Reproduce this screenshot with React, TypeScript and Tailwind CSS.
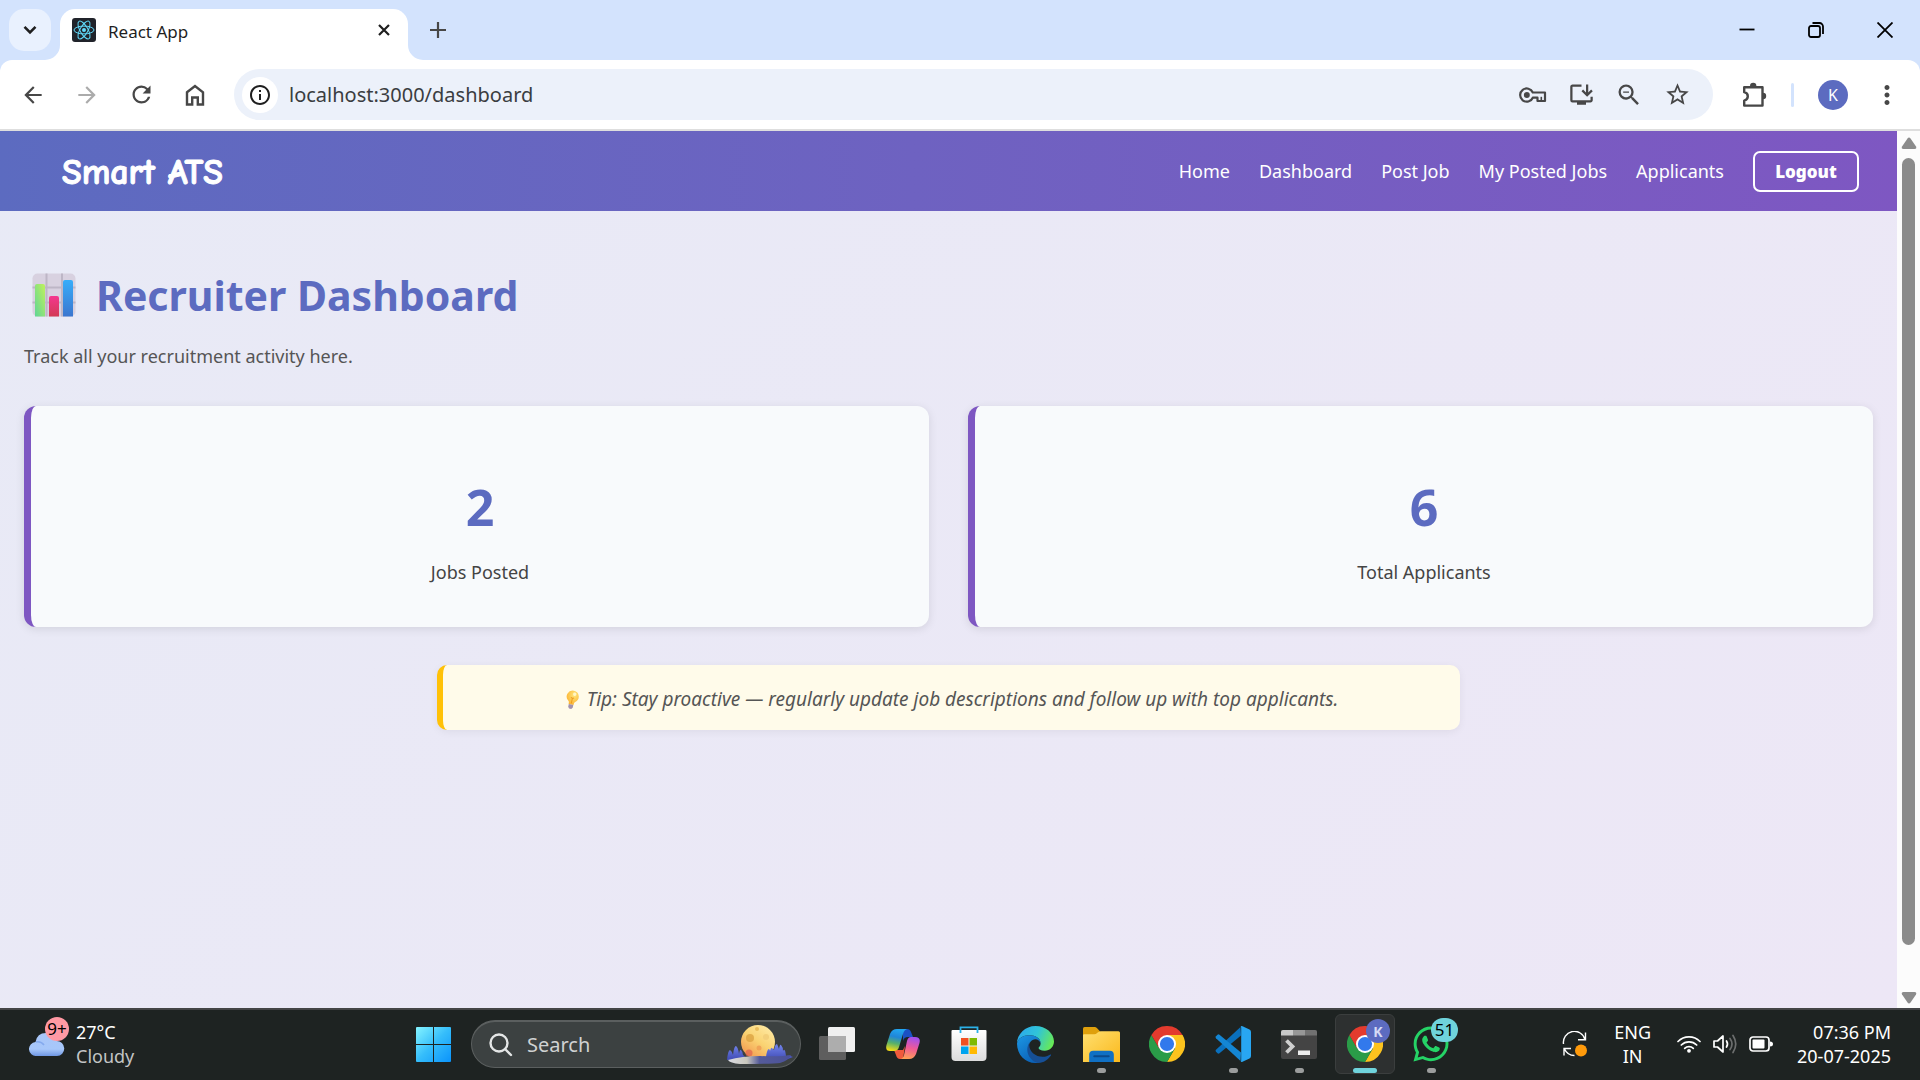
import React from "react";
import {
  MdArrowBack,
  MdArrowForward,
  MdRefresh,
  MdInfoOutline,
  MdOutlineInstallDesktop,
  MdZoomOut,
  MdStarBorder,
  MdMoreVert,
} from "react-icons/md";
import { FaWhatsapp } from "react-icons/fa";

const NAV_LINKS = ["Home", "Dashboard", "Post Job", "My Posted Jobs", "Applicants"];
const STATS = [
  { value: 2, label: "Jobs Posted" },
  { value: 6, label: "Total Applicants" },
];

function ReactLogo() {
  return (
    <svg viewBox="0 0 24 24" className="size-6" aria-hidden="true">
      <rect width="24" height="24" rx="3" fill="#20232a" />
      <g fill="none" stroke="#61dafb" strokeWidth="1">
        <ellipse cx="12" cy="12" rx="10" ry="3.9" />
        <ellipse cx="12" cy="12" rx="10" ry="3.9" transform="rotate(60 12 12)" />
        <ellipse cx="12" cy="12" rx="10" ry="3.9" transform="rotate(120 12 12)" />
      </g>
      <circle cx="12" cy="12" r="2" fill="#61dafb" />
    </svg>
  );
}

function KeyIcon() {
  return (
    <svg viewBox="0 0 28 20" width="28" height="20" fill="none" stroke="#474747" strokeWidth="2.2" aria-hidden="true">
      <path d="M13.8 7.5A6.6 6.6 0 1 0 13.8 12.7H18.5V16H26V7.5Z" strokeLinejoin="round" />
      <path d="M22.3 16V11.8" strokeWidth="1.6" />
      <circle cx="7.8" cy="10" r="3" fill="#474747" stroke="none" />
    </svg>
  );
}

function PuzzleIcon() {
  return (
    <svg viewBox="0 0 26 26" width="26" height="26" aria-hidden="true">
      <path d="M3.2 5.2H21.5V23.6H3.2V18.6C8 17.5 8 11.2 3.2 10.2Z" fill="none" stroke="#474747" strokeWidth="2.4" strokeLinejoin="round" />
      <path d="M9 4a3.2 3.2 0 0 1 6.4 0ZM22 10.8a3.2 3.2 0 0 1 0 6.4Z" fill="#474747" />
    </svg>
  );
}

function IconButton({ label, className = "", children }: { label: string; className?: string; children: React.ReactNode }) {
  return (
    <button type="button" aria-label={label} className={`flex shrink-0 items-center justify-center rounded-full text-[#474747] ${className}`}>
      {children}
    </button>
  );
}

function TabStrip() {
  return (
    <div className="flex h-[60px] items-end bg-[#d3e3fd]">
      <button type="button" aria-label="Search tabs" className="ml-[9px] mb-[9px] flex size-[42px] items-center justify-center rounded-[15px] bg-[#e9f1fe] text-[#1f1f1f]">
        <svg viewBox="0 0 14 10" width="14" height="10" fill="none" stroke="currentColor" strokeWidth="2.6" aria-hidden="true">
          <path d="M1.5 1.8 7 7.3l5.500-5.500" />
        </svg>
      </button>
      <div className="relative ml-[9px] flex h-[51px] w-[348px] items-center rounded-t-[15px] bg-white pr-3 pb-[9px] pl-3">
        <svg viewBox="0 0 15 15" className="absolute bottom-0 -left-[15px] size-[15px] fill-white" aria-hidden="true">
          <path d="M15 0v15H0A15 15 0 0 0 15 0Z" />
        </svg>
        <svg viewBox="0 0 15 15" className="absolute -right-[15px] bottom-0 size-[15px] fill-white" aria-hidden="true">
          <path d="M0 0v15h15A15 15 0 0 1 0 0Z" />
        </svg>
        <ReactLogo />
        <span className="ml-3 grow pt-[3px] text-[17px] text-[#1f1f1f]">React App</span>
        <button type="button" aria-label="Close tab" className="flex size-6 items-center justify-center text-[#1f1f1f]">
          <svg viewBox="0 0 12 12" width="12" height="12" stroke="currentColor" strokeWidth="2.2" aria-hidden="true">
            <path d="M1 1l10 10M11 1 1 11" />
          </svg>
        </button>
      </div>
      <button type="button" aria-label="New tab" className="mb-[15px] ml-[15px] flex size-[30px] items-center justify-center">
        <svg viewBox="0 0 16 16" width="16" height="16" stroke="#474747" strokeWidth="2.2" aria-hidden="true">
          <path d="M8 0v16M0 8h16" />
        </svg>
      </button>
      <div className="ml-auto flex h-full pr-px">
        <button type="button" aria-label="Minimize" className="flex w-[69px] items-center justify-center">
          <svg viewBox="0 0 16 16" width="16" height="16" stroke="#000" strokeWidth="1.8" aria-hidden="true">
            <path d="M0.500 7.500h15" />
          </svg>
        </button>
        <button type="button" aria-label="Restore" className="flex w-[69px] items-center justify-center">
          <svg viewBox="0 0 16 16" width="16" height="16" fill="none" stroke="#000" strokeWidth="1.8" aria-hidden="true">
            <rect x="1" y="4" width="11" height="11" rx="2" />
            <path d="M4.500 1H11.500A3.500 3.500 0 0 1 15 4.500V12" />
          </svg>
        </button>
        <button type="button" aria-label="Close" className="flex w-[69px] items-center justify-center">
          <svg viewBox="0 0 16 16" width="16" height="16" stroke="#000" strokeWidth="1.8" aria-hidden="true">
            <path d="M0.500 0.500l15 15M15.500 0.500l-15 15" />
          </svg>
        </button>
      </div>
    </div>
  );
}

function Toolbar() {
  return (
    <div className="bg-[#d3e3fd]">
      <div className="flex h-[71px] items-center rounded-t-[12px] border-b-2 border-[#dedede] bg-white pl-[6px]">
        <IconButton label="Back" className="h-[42px] w-[54px]">
          <MdArrowBack size={26} />
        </IconButton>
        <IconButton label="Forward" className="h-[42px] w-[54px] opacity-45">
          <MdArrowForward size={26} />
        </IconButton>
        <IconButton label="Reload" className="h-[42px] w-[54px]">
          <MdRefresh size={27} />
        </IconButton>
        <IconButton label="Home" className="h-[42px] w-[54px]">
          <svg viewBox="0 0 20 22" width="20" height="22" fill="none" stroke="currentColor" strokeWidth="2.4" aria-hidden="true">
            <path d="M2 8.300 10 2l8 6.300V20.500H12.800V13.500H7.200V20.500H2Z" />
          </svg>
        </IconButton>
        <div className="ml-3 flex h-[51px] grow items-center rounded-full bg-[#ecf1fa] pr-3 pl-2">
          <IconButton label="Site information" className="size-9 bg-white">
            <MdInfoOutline size={24} className="text-[#1f1f1f]" />
          </IconButton>
          <input
            aria-label="Address"
            type="text"
            defaultValue="localhost:3000/dashboard"
            className="ml-[11px] min-w-0 grow bg-transparent text-[20px] text-[#3a3d41] outline-none"
          />
          <div className="flex">
            <IconButton label="Manage passwords" className="h-[42px] w-12">
              <KeyIcon />
            </IconButton>
            <IconButton label="Install app" className="h-[42px] w-12">
              <MdOutlineInstallDesktop size={27} />
            </IconButton>
            <IconButton label="Zoom" className="h-[42px] w-12">
              <MdZoomOut size={28} />
            </IconButton>
            <IconButton label="Bookmark this tab" className="h-[42px] w-12">
              <MdStarBorder size={27} />
            </IconButton>
          </div>
        </div>
        <IconButton label="Extensions" className="ml-5 size-[42px]">
          <PuzzleIcon />
        </IconButton>
        <div className="ml-4 h-6 w-[3px] rounded-full bg-[#d3e3fd]" />
        <button type="button" aria-label="Profile K" className="ml-6 flex size-[30px] items-center justify-center rounded-full bg-[#5c6bc0] text-[16px] text-white">
          K
        </button>
        <IconButton label="Menu" className="mr-3 ml-[18px] size-[42px]">
          <MdMoreVert size={30} />
        </IconButton>
      </div>
    </div>
  );
}

function SiteHeader() {
  return (
    <header className="flex h-20 shrink-0 items-center justify-between bg-linear-to-r from-[#5c6bc0] to-[#7e57c2] pr-[38px] pl-[62px] text-white">
      <div className="pt-1 font-['Comic_Sans_MS','Comic_Neue','Lato',sans-serif] text-[36px] leading-[48px] font-bold [-webkit-text-stroke:1px_white]">
        Smart ATS
      </div>
      <nav className="flex items-center gap-[29px] text-[18px]">
        {NAV_LINKS.map((link) => (
          <a key={link} href="#" className="whitespace-nowrap">
            {link}
          </a>
        ))}
        <button type="button" className="h-[41px] w-[106px] rounded-[7px] border-2 border-white pt-px text-[17px] font-black">
          Logout
        </button>
      </nav>
    </header>
  );
}

function ChartEmoji() {
  return (
    <svg viewBox="0 0 44 44" className="size-11" aria-hidden="true">
      <defs>
        <linearGradient id="barGreen" x1="1" y1="0" x2="0" y2="1">
          <stop offset="0" stopColor="#c0f25c" />
          <stop offset="1" stopColor="#5fd596" />
        </linearGradient>
        <linearGradient id="barPink" x1="0" y1="0" x2="0" y2="1">
          <stop offset="0" stopColor="#f4368f" />
          <stop offset="1" stopColor="#d23a55" />
        </linearGradient>
        <linearGradient id="barBlue" x1="0" y1="0" x2="0" y2="1">
          <stop offset="0" stopColor="#37adfa" />
          <stop offset="1" stopColor="#3b76cf" />
        </linearGradient>
      </defs>
      <rect x="0.500" y="0.500" width="43" height="43" rx="5" fill="#d8d1e0" />
      <path d="M14.500 0.500v43M30 0.500v43M0.500 14.500h43M0.500 29.500h43" stroke="#bdb6c6" strokeWidth="2" />
      <path d="M3 43.500V13a2 2 0 0 1 2-2h6a2 2 0 0 1 2 2v30.500Z" fill="url(#barGreen)" />
      <path d="M17 43.500V25a2 2 0 0 1 2-2h6a2 2 0 0 1 2 2v18.500Z" fill="url(#barPink)" />
      <path d="M31 43.500V9a2 2 0 0 1 2-2h6a2 2 0 0 1 2 2v34.500Z" fill="url(#barBlue)" />
    </svg>
  );
}

function BulbEmoji() {
  return (
    <svg viewBox="0 0 14 20" width="14" height="20" aria-hidden="true">
      <defs>
        <radialGradient id="bulb" cx="0.6" cy="0.3" r="0.8">
          <stop offset="0" stopColor="#ffe57a" />
          <stop offset="1" stopColor="#fbae2c" />
        </radialGradient>
      </defs>
      <g transform="rotate(12 7 10)">
        <path d="M7 0.500a6 6 0 0 1 3.600 10.800c-1 .8-1 1.600-1.100 3.200h-5c0-1.600-.1-2.400-1.100-3.200A6 6 0 0 1 7 .5Z" fill="url(#bulb)" />
        <circle cx="8.500" cy="3.800" r="1.700" fill="#fff6c8" />
        <path d="M5.500 7.500c.8 1 2.200 1 3 0M7 8.500v5" stroke="#ee9a1f" fill="none" />
        <path d="M4.700 14.500h4.600v3l-1.200 1.500H5.900l-1.200-1.500Z" fill="#a292ae" />
      </g>
    </svg>
  );
}

function Dashboard() {
  return (
    <main className="grow px-6 pt-14">
      <h1 className="flex items-center gap-5 pl-2 text-[41px] leading-[56px] font-bold text-[#5c6bc0]">
        <ChartEmoji />
        Recruiter Dashboard
      </h1>
      <p className="mt-[19px] text-[18px] leading-[28px] text-[#555]">Track all your recruitment activity here.</p>
      <section className="mt-9 grid grid-cols-2 gap-[39px]">
        {STATS.map((stat) => (
          <div
            key={stat.label}
            className="flex h-[221px] flex-col items-center rounded-[12px] border-l-[7px] border-[#7e57c2] bg-[#f8fafc] pt-[67px] shadow-[0_2px_10px_rgba(0,0,0,0.1)]"
          >
            <h2 className="text-[50px] leading-[68px] font-bold text-[#5c6bc0]">{stat.value}</h2>
            <p className="mt-[17px] text-[18px] leading-[28px] text-[#444]">{stat.label}</p>
          </div>
        ))}
      </section>
      <div className="mx-auto mt-[38px] flex h-[65px] max-w-[1023px] items-center justify-center gap-2 rounded-[10px] border-l-[6px] border-[#ffc107] bg-[#fffbea] pt-1 text-[19px] text-[#555] italic shadow-[0_2px_8px_rgba(0,0,0,0.06)]">
        <BulbEmoji />
        <span>Tip: Stay proactive — regularly update job descriptions and follow up with top applicants.</span>
      </div>
    </main>
  );
}

function Scrollbar() {
  return (
    <div className="flex w-[23px] shrink-0 flex-col items-center bg-[#fcfcfc] pt-[5px] pb-[3px]" aria-hidden="true">
      <svg viewBox="0 0 16 14" width="16" height="14" className="fill-[#8b8b8b]">
        <path d="M6.500 2.500 1 10.500Q0 13 2.500 13h11Q16 13 15 10.500L9.500 2.500Q8 .5 6.500 2.500Z" />
      </svg>
      <div className="mt-2 w-[13px] grow rounded-full bg-[#8b8b8b]" />
      <svg viewBox="0 0 16 14" width="16" height="14" className="mt-[46px] rotate-180 fill-[#8b8b8b]">
        <path d="M6.500 2.500 1 10.500Q0 13 2.500 13h11Q16 13 15 10.500L9.500 2.500Q8 .5 6.500 2.500Z" />
      </svg>
    </div>
  );
}

function WindowsLogo() {
  return (
    <svg viewBox="0 0 35 35" width="35" height="35" aria-hidden="true">
      <defs>
        <linearGradient id="win" gradientUnits="userSpaceOnUse" x1="0" y1="0" x2="35" y2="35">
          <stop offset="0" stopColor="#85f4ff" />
          <stop offset="0.5" stopColor="#35bdfb" />
          <stop offset="1" stopColor="#0a93fb" />
        </linearGradient>
      </defs>
      <path d="M1 0h16v17H0V1Q0 0 1 0ZM18 0h16q1 0 1 1v16H18ZM0 18h17v17H1q-1 0-1-1ZM18 18h17v16q0 1-1 1H18Z" fill="url(#win)" />
    </svg>
  );
}

function MoonScene() {
  return (
    <svg viewBox="0 0 66 42" width="66" height="42" className="shrink-0" aria-hidden="true">
      <defs>
        <linearGradient id="moon" x1="1" y1="0" x2="0.3" y2="1">
          <stop offset="0" stopColor="#ffeeae" />
          <stop offset="0.55" stopColor="#fad372" />
          <stop offset="1" stopColor="#f39a50" />
        </linearGradient>
        <linearGradient id="shore" x1="0" x2="1">
          <stop offset="0" stopColor="#dcdde4" />
          <stop offset="0.3" stopColor="#c9c7bd" />
          <stop offset="0.5" stopColor="#555b9a" />
          <stop offset="1" stopColor="#4a519a" />
        </linearGradient>
        <linearGradient id="trees" x1="0" y1="0" x2="0" y2="1">
          <stop offset="0" stopColor="#7486ee" />
          <stop offset="1" stopColor="#3c47b0" />
        </linearGradient>
      </defs>
      <circle cx="31" cy="18" r="17" fill="url(#moon)" />
      <circle cx="23" cy="14" r="4" fill="#d9a03f" opacity=".75" />
      <circle cx="39" cy="13" r="3" fill="#f3cf7a" />
      <circle cx="30" cy="5" r="2" fill="#eabd5c" />
      <circle cx="32" cy="24" r="2.500" fill="#f0a457" />
      <circle cx="22" cy="29" r="3.500" fill="#e0664f" opacity=".75" />
      <path d="M0 36q1-10 3-10 2 1 3 5 1-9 3-9 2 1 3 8 1-5 2-4 2 2 2 5 2 1 2 3l-6 3ZM39 33q1-8 3-8 1 1 1 2 1-4 2-3l2 2q1-6 3-6 1 2 2 5 1-5 2-4 2 2 2 6 2-4 3 5 3-1 7 1l-10 4Z" fill="url(#trees)" />
      <path d="M1 36Q15 32 33 32q20 1 31-1-2 5-11 8-5 1-40 1-10-1-12-4Z" fill="url(#shore)" />
    </svg>
  );
}

function TaskViewIcon() {
  return (
    <svg viewBox="0 0 36 34" width="36" height="34" aria-hidden="true">
      <rect x="0" y="9" width="27" height="24" rx="1.500" fill="#5e5e5e" />
      <rect x="9" y="0" width="27" height="25" rx="1.500" fill="#f0f0f0" />
      <path d="M9 9h18v16H9Z" fill="#adadad" />
    </svg>
  );
}

function CopilotIcon() {
  return (
    <svg viewBox="0 0 34 32" width="34" height="32" aria-hidden="true">
      <defs>
        <linearGradient id="copL" x1="0.5" y1="0" x2="0.3" y2="1">
          <stop offset="0" stopColor="#22a5f0" />
          <stop offset="0.35" stopColor="#1f86d8" />
          <stop offset="0.65" stopColor="#58b06a" />
          <stop offset="1" stopColor="#f6dc14" />
        </linearGradient>
        <linearGradient id="copR" x1="0.6" y1="0" x2="0.4" y2="1">
          <stop offset="0" stopColor="#a050f0" />
          <stop offset="0.5" stopColor="#f05a96" />
          <stop offset="1" stopColor="#fda055" />
        </linearGradient>
      </defs>
      <path d="M17 1h4q3 0 4 3l2 5h-5q-4 0-5 4Z" fill="#1b50c4" />
      <path d="M8 22h9l2-4-2 13h-3q-3 0-4-4Z" fill="#ef5a3c" />
      <path d="M11 1h10q-3 1-4 5l-4 13q-1 4-5 4H4q-5 0-3.500-6L4 6Q6 1 11 1Z" fill="url(#copL)" />
      <path d="M25 9h4q6 0 4.500 6l-3.500 11q-2 5-7 5H14q3 0 4-4l3-14q1-4 4-4Z" fill="url(#copR)" />
    </svg>
  );
}

function StoreIcon() {
  return (
    <svg viewBox="0 0 36 36" width="36" height="36" aria-hidden="true">
      <defs>
        <linearGradient id="bag" x1="0" y1="0" x2="0" y2="1">
          <stop offset="0" stopColor="#fff" />
          <stop offset="1" stopColor="#dcdcdc" />
        </linearGradient>
      </defs>
      <path d="M0.500 5q0-1 1-1h33q1 0 1 1v26q0 4-4 4h-27q-4 0-4-4Z" fill="url(#bag)" />
      <path d="M9.500 7V1.300h17V7" fill="none" stroke="#2bb1e8" strokeWidth="1.800" />
      <path d="M10 12h7.500v7.500H10Z" fill="#f25022" />
      <path d="M18.500 12H26v7.500h-7.500Z" fill="#7fba00" />
      <path d="M10 20.500h7.500V28H10Z" fill="#00a4ef" />
      <path d="M18.500 20.500H26V28h-7.500Z" fill="#ffb900" />
    </svg>
  );
}

function EdgeIcon() {
  return (
    <svg viewBox="0 0 36 36" width="37" height="37" aria-hidden="true">
      <defs>
        <linearGradient id="edgeTop" x1="0" y1="0.3" x2="1" y2="0.6">
          <stop offset="0" stopColor="#2ba9ec" />
          <stop offset="0.5" stopColor="#30c4d8" />
          <stop offset="1" stopColor="#68ea55" />
        </linearGradient>
        <linearGradient id="edgeMid" x1="0" y1="0" x2="0.6" y2="1">
          <stop offset="0" stopColor="#1c97e4" />
          <stop offset="1" stopColor="#0b62b8" />
        </linearGradient>
      </defs>
      <path d="M0 17C0 8 8 0 18 0s18 7 18 15c0 5-4 9-9 9-4 0-6-1-6-2.500 0-1 2-2 2-4.500C23 12 18 9 12 9 6 9 1 12 0 17Z" fill="url(#edgeTop)" />
      <path d="M0 17c1-5 6-8 12-8 6 0 11 3 11 8-1-3-3-4-5-4-4 0-7 4-7 9 0 6 4 12 11 14-2 .3-3 0-4 0C8 36 0 28 0 17Z" fill="url(#edgeMid)" />
      <path d="M12 19c0 6 6 11 13 11 3 0 5-1 7-2 1-.5 1.500 0 1 .8C30 33 26 36 21 36c-6-1-11-7-11-13 0-3 1-6 3-8-1 1-1 3-1 4Z" fill="#164f96" />
    </svg>
  );
}

function ExplorerIcon() {
  return (
    <svg viewBox="0 0 36 34" width="37" height="35" aria-hidden="true">
      <defs>
        <linearGradient id="folder" x1="0" y1="0" x2="1" y2="1">
          <stop offset="0" stopColor="#ffdf70" />
          <stop offset="1" stopColor="#fab91c" />
        </linearGradient>
      </defs>
      <path d="M0 1.500Q0 0 1.500 0h10q1 0 2 1l3 3v8H0Z" fill="#dfa00c" />
      <path d="M0 8q0-1 1-1h10q1.500 0 3-1.500Q15.500 4 17 4h17.500Q36 4 36 5.500V34H0Z" fill="url(#folder)" />
      <path d="M6 34V27q0-4 4-4h16q4 0 4 4v7Z" fill="#1070c4" />
      <path d="M11 28.500h14" stroke="#0b4a8c" strokeWidth="2" strokeLinecap="round" />
    </svg>
  );
}

function ChromeIcon() {
  return (
    <svg viewBox="0 0 36 36" width="36" height="36" aria-hidden="true">
      <path d="M18 18 2.410 9A18 18 0 0 1 33.590 9Z" fill="#e33b2e" />
      <path d="M18 9H33.590A18 18 0 0 1 18 36L25.790 22.500Z" fill="#fcc31e" />
      <path d="M10.210 22.500 2.410 9A18 18 0 0 0 18 36L25.790 22.500Z" fill="#2a9c48" />
      <path d="M18 9H33.590L2.410 9 10.210 22.500Z" fill="#e33b2e" />
      <circle cx="18" cy="18" r="9" fill="#fff" />
      <circle cx="18" cy="18" r="7.100" fill="#3279ec" />
    </svg>
  );
}

function VsCodeIcon() {
  return (
    <svg viewBox="0 0 36 36" width="36" height="36" aria-hidden="true">
      <path d="M26 9.500 4.500 27.300q-1 .8-2 0l-1.500-1.500q-1-1 0-2L25.500 1Z" fill="#0a70bd" />
      <path d="M26 26.500 4.500 8.700q-1-.8-2 0L1 10.200q-1 1 0 2L25.500 35Z" fill="#1486d4" />
      <path d="M25.500.5q.8-.8 2-.3l7 3.300q1.500.8 1.500 2.500v24q0 1.700-1.500 2.500l-7 3.300q-1.200.5-2-.3.700.2.700-1.500V2q0-1.700-.7-1.500Z" fill="#28a6f2" />
    </svg>
  );
}

function TerminalIcon() {
  return (
    <svg viewBox="0 0 36 29" width="36" height="29" aria-hidden="true">
      <rect width="36" height="29" rx="2" fill="#444" />
      <path d="M0 2q0-2 2-2h10v5.500H0Z" fill="#c9c9c9" />
      <path d="M12 0h12v5.500H12Z" fill="#979797" />
      <path d="M24 0h10q2 0 2 2v3.500H24Z" fill="#717171" />
      <path d="M5.500 10.500 11.500 16.500 5.500 22.500" fill="none" stroke="#cfcfcf" strokeWidth="3.800" />
      <path d="M17 20.500h12v4.500H17Z" fill="#ececec" />
    </svg>
  );
}

function CloudIcon() {
  return (
    <svg viewBox="0 0 36 24" width="36" height="24" aria-hidden="true">
      <defs>
        <linearGradient id="cloud" x1="0" y1="0" x2="0" y2="1">
          <stop offset="0" stopColor="#a9c6f8" />
          <stop offset="0.7" stopColor="#a7c7fa" />
          <stop offset="1" stopColor="#6f97e4" />
        </linearGradient>
      </defs>
      <path d="M7.500 24a7 7 0 0 1-1-14Q8 1 17 1q8 0 10.500 8A7.500 7.500 0 0 1 28 24Z" fill="url(#cloud)" />
      <path d="M7 10q5-1 8 3" fill="none" stroke="#6d96e6" strokeWidth="1.500" opacity=".6" />
    </svg>
  );
}

type AppState = "closed" | "open" | "active";

function TaskbarItem({ label, state = "closed", badge, children }: { label: string; state?: AppState; badge?: React.ReactNode; children: React.ReactNode }) {
  return (
    <button type="button" aria-label={label} className="relative flex h-full w-[66px] shrink-0 items-center justify-center">
      {state === "active" && <span className="absolute inset-x-[3px] inset-y-1 rounded-[6px] border border-[#3b3e3e] bg-[#2d3030]" />}
      <span className="relative">
        {children}
        {badge}
      </span>
      {state === "open" && <span className="absolute bottom-[5px] h-[5px] w-[9px] rounded-full bg-[#9b9d9d]" />}
      {state === "active" && <span className="absolute bottom-[5px] h-[5px] w-6 rounded-full bg-[#6fd3dc]" />}
    </button>
  );
}

function UpdateIcon() {
  return (
    <svg viewBox="0 0 26 26" width="26" height="26" fill="none" stroke="#fff" strokeWidth="1.400" aria-hidden="true">
      <path d="M1.500 13A11 11 0 0 1 23 8.500M23.500 1.500v7.300h-7.500M2 24.500V17.500h7M2.500 18a11 11 0 0 0 10 6.500" />
      <circle cx="19" cy="19.500" r="6" fill="#ff9a0b" stroke="none" />
    </svg>
  );
}

function WifiIcon() {
  return (
    <svg viewBox="0 0 24 18" width="24" height="18" fill="none" stroke="#fff" strokeWidth="1.700" strokeLinecap="round" aria-hidden="true">
      <path d="M1 6.500a15.500 15.500 0 0 1 22 0M4.300 10a11 11 0 0 1 15.400 0M7.700 13.300a6.200 6.200 0 0 1 8.600 0" />
      <circle cx="12" cy="15.800" r="1.900" fill="#fff" stroke="none" />
    </svg>
  );
}

function VolumeIcon() {
  return (
    <svg viewBox="0 0 24 20" width="24" height="20" fill="none" stroke="#fff" strokeWidth="1.700" strokeLinecap="round" strokeLinejoin="round" aria-hidden="true">
      <path d="M1 7h3.500L10 2v16l-5.500-5H1Z" />
      <path d="M13.500 7q2 3 0 6" />
      <path d="M17 4.500q4 5.500 0 11M20 1.500q5.500 8.500 0 17" stroke="#6c6e6e" />
    </svg>
  );
}

function BatteryIcon() {
  return (
    <svg viewBox="0 0 24 16" width="24" height="16" aria-hidden="true">
      <rect x="1" y="1" width="19" height="14" rx="3" fill="none" stroke="#fff" strokeWidth="1.700" />
      <rect x="3.500" y="3.500" width="12" height="9" rx="1" fill="#fff" />
      <path d="M21 5.500q3 0 3 2.500t-3 2.500Z" fill="#fff" />
    </svg>
  );
}

function Taskbar() {
  return (
    <footer className="flex h-[72px] items-center border-t-2 border-[#444547] bg-[#1e2322] pb-[2px] text-white">
      <button type="button" className="flex h-full w-[400px] items-center pl-[29px] text-left text-[18px] leading-6">
        <span className="relative">
          <CloudIcon />
          <span className="absolute -top-[15px] left-4 flex size-6 items-center justify-center rounded-full bg-[#ff99a4] text-[17px] text-black">9+</span>
        </span>
        <span className="ml-[11px] flex flex-col">
          <span>27°C</span>
          <span className="text-[#c3c5c5]">Cloudy</span>
        </span>
      </button>
      <TaskbarItem label="Start">
        <WindowsLogo />
      </TaskbarItem>
      <label className="mr-[3px] ml-[5px] flex h-12 w-[330px] shrink-0 items-center overflow-hidden rounded-full border border-t-2 border-[#5b5f5f] bg-[#3c4141] pr-[7px] pl-[17px]">
        <svg viewBox="0 0 24 24" width="24" height="24" className="shrink-0" fill="none" stroke="#e4e6e6" strokeWidth="2.400" strokeLinecap="round" aria-hidden="true">
          <circle cx="10" cy="10" r="8.500" />
          <path d="m16 16 6 6" />
        </svg>
        <input type="text" aria-label="Search" placeholder="Search" className="ml-[14px] min-w-0 grow bg-transparent text-[20px] outline-none placeholder:text-[#d0d2d2]" />
        <MoonScene />
      </label>
      <TaskbarItem label="Task view">
        <TaskViewIcon />
      </TaskbarItem>
      <TaskbarItem label="Copilot">
        <CopilotIcon />
      </TaskbarItem>
      <TaskbarItem label="Microsoft Store">
        <StoreIcon />
      </TaskbarItem>
      <TaskbarItem label="Microsoft Edge">
        <EdgeIcon />
      </TaskbarItem>
      <TaskbarItem label="File Explorer" state="open">
        <ExplorerIcon />
      </TaskbarItem>
      <TaskbarItem label="Google Chrome">
        <ChromeIcon />
      </TaskbarItem>
      <TaskbarItem label="Visual Studio Code" state="open">
        <VsCodeIcon />
      </TaskbarItem>
      <TaskbarItem label="Terminal" state="open">
        <TerminalIcon />
      </TaskbarItem>
      <TaskbarItem
        label="Google Chrome, profile K"
        state="active"
        badge={
          <span className="absolute -top-[7px] -right-[7px] flex size-6 items-center justify-center rounded-full bg-[#5c6bc0] text-[14px] font-bold text-[#d5daf5]">
            K
          </span>
        }
      >
        <ChromeIcon />
      </TaskbarItem>
      <TaskbarItem
        label="WhatsApp"
        state="open"
        badge={
          <span className="absolute -top-[6px] -right-[7px] flex h-6 w-[27px] items-center justify-center rounded-full bg-[#6fd3dc] text-[17px] text-black">51</span>
        }
      >
        <FaWhatsapp size={40} color="#25d366" />
      </TaskbarItem>
      <div className="ml-auto flex items-center pr-[29px] text-[18px] leading-6">
        <UpdateIcon />
        <div className="ml-[26px] flex flex-col items-center">
          <span>ENG</span>
          <span>IN</span>
        </div>
        <div className="ml-[26px] flex items-center gap-3">
          <WifiIcon />
          <VolumeIcon />
          <BatteryIcon />
        </div>
        <div className="ml-6 flex flex-col items-end">
          <span>07:36 PM</span>
          <span>20-07-2025</span>
        </div>
      </div>
    </footer>
  );
}

export default function App() {
  return (
    <div className="flex min-h-screen flex-col font-['Noto_Sans','Open_Sans',sans-serif]">
      <TabStrip />
      <Toolbar />
      <div className="flex grow">
        <div className="flex grow flex-col bg-linear-135 from-[#e8eaf6] to-[#ede7f6]">
          <SiteHeader />
          <Dashboard />
        </div>
        <Scrollbar />
      </div>
      <Taskbar />
    </div>
  );
}
